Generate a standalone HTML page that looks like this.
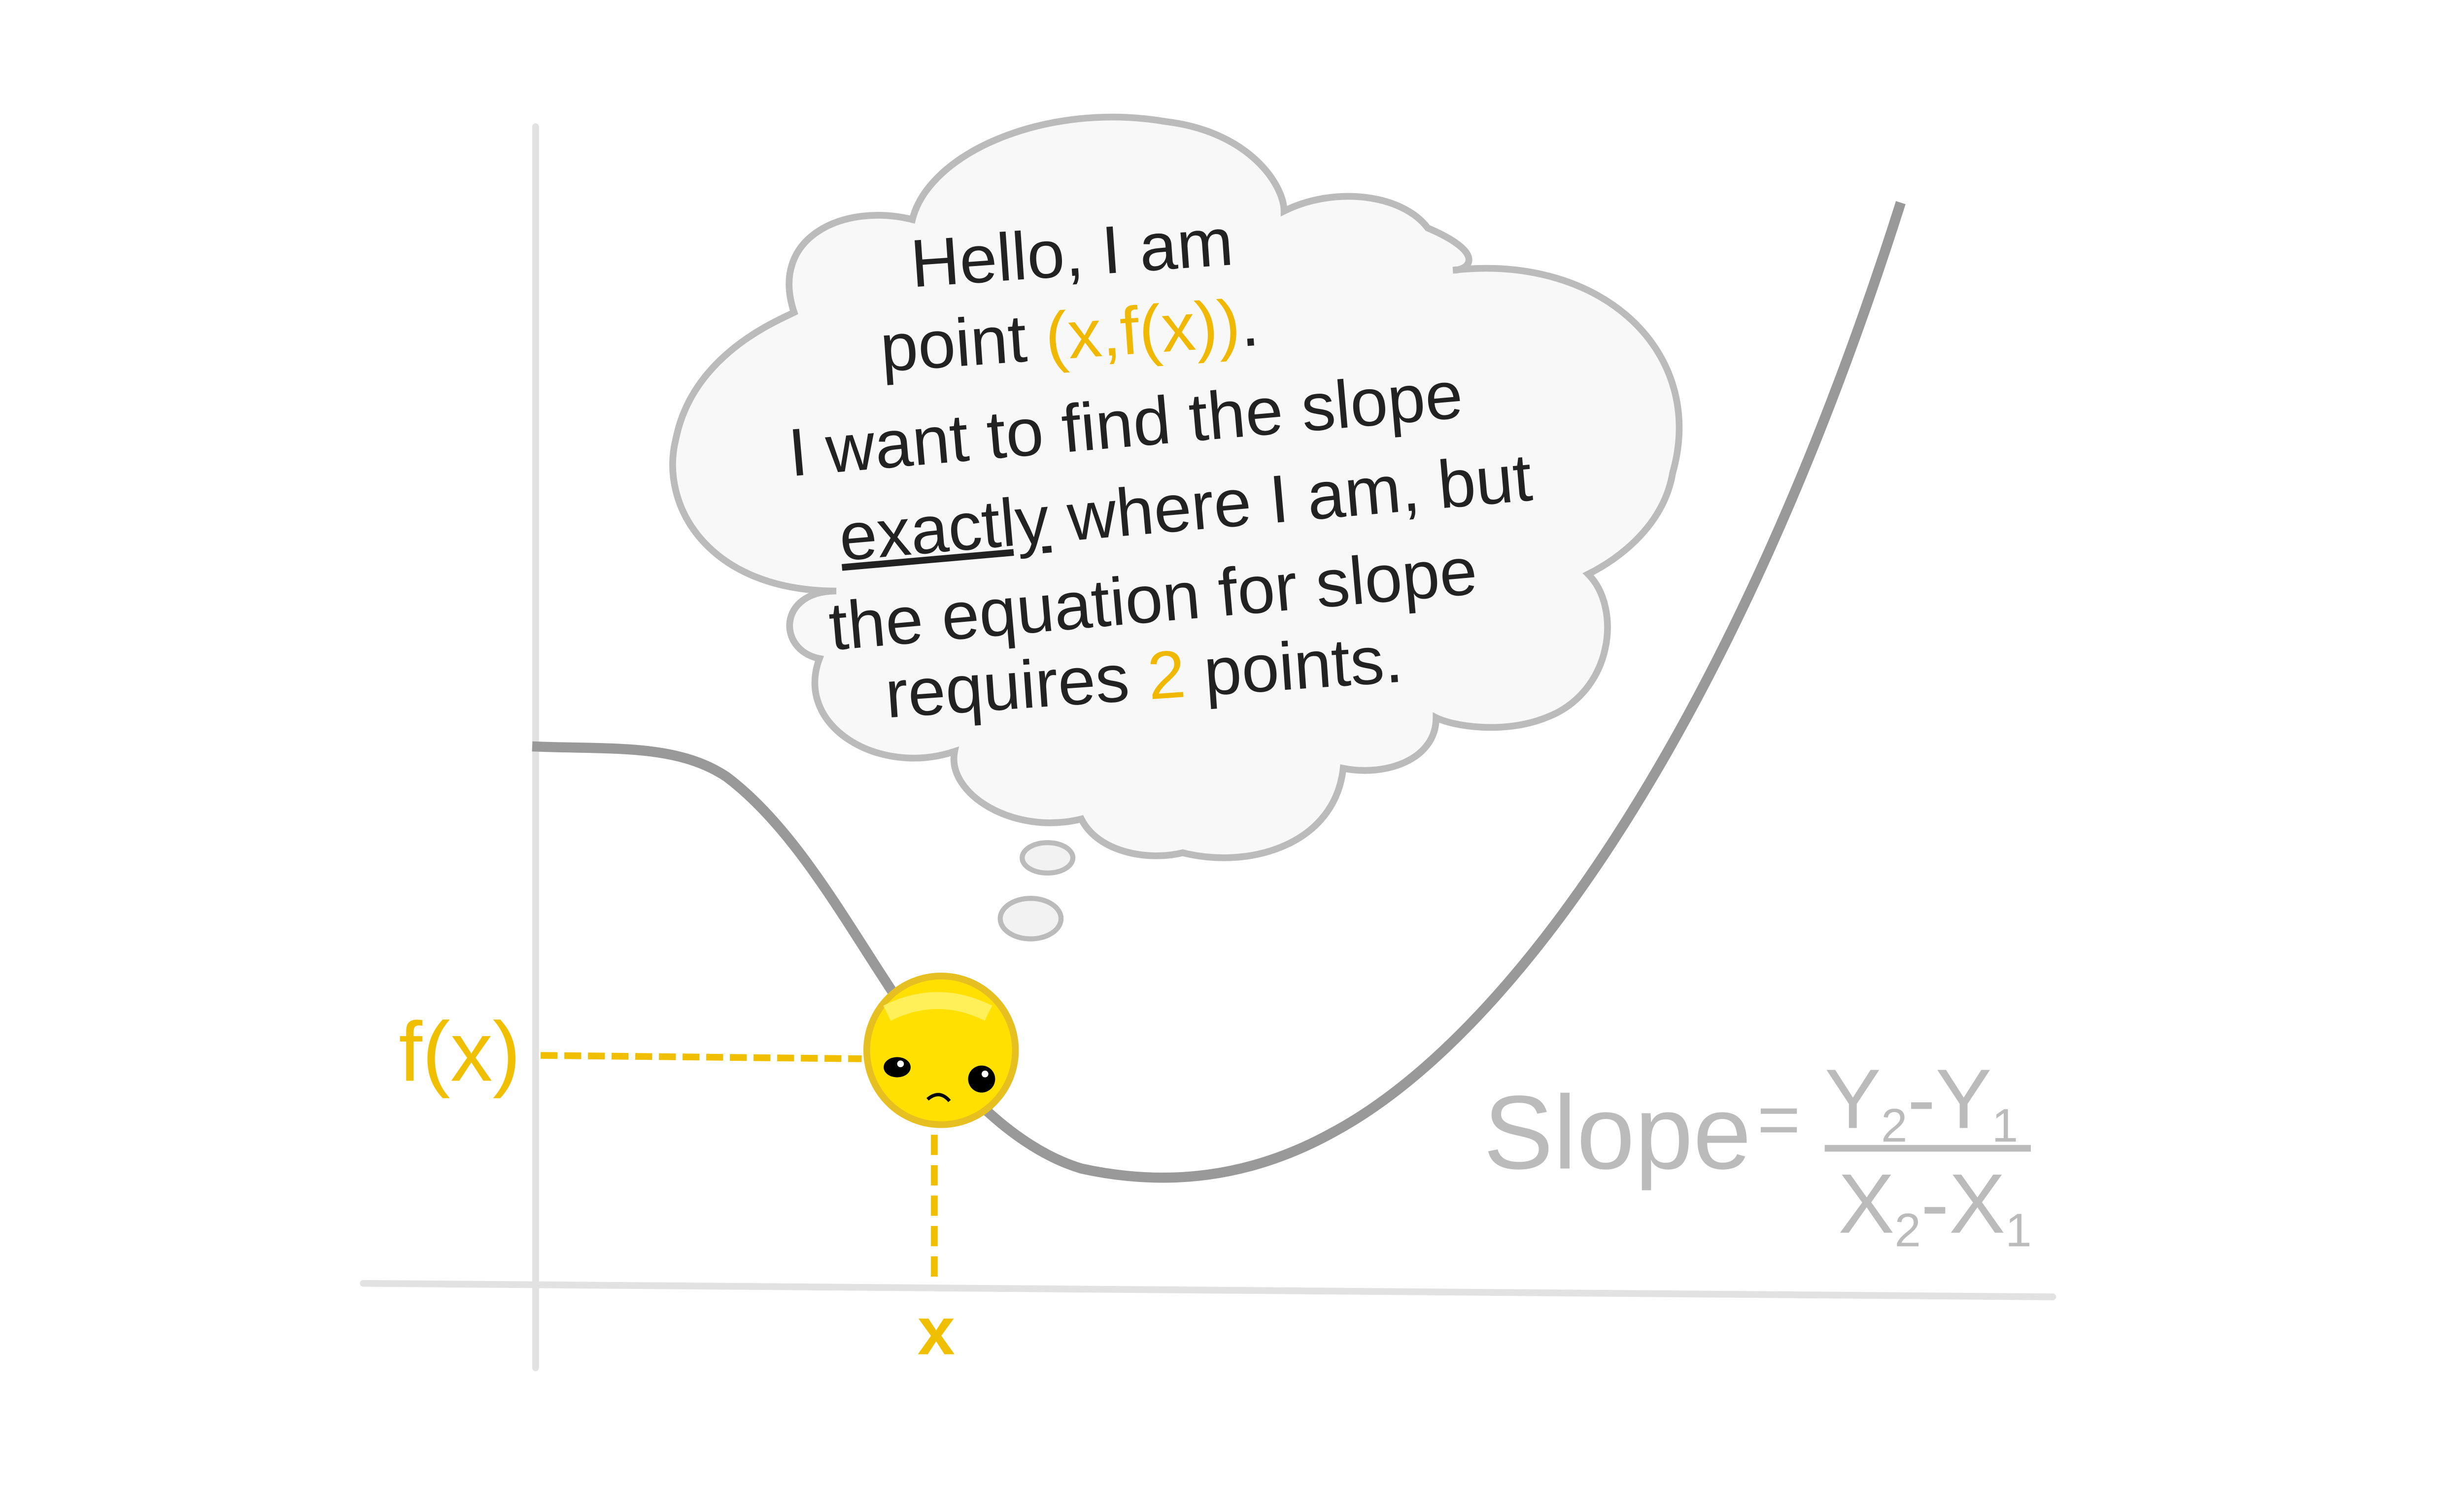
<!DOCTYPE html>
<html><head><style>html,body{margin:0;padding:0;background:#fff;width:5321px;height:3016px;overflow:hidden;}svg{display:block}</style></head>
<body>
<svg width="5321" height="3016" viewBox="0 0 1552 880" preserveAspectRatio="none" xmlns="http://www.w3.org/2000/svg" overflow="hidden">
<rect width="1552" height="880" fill="#fff"/>
<line x1="317" y1="75" x2="317" y2="810" stroke="#e2e2e2" stroke-width="4" stroke-linecap="round"/>
<line x1="215" y1="760" x2="1215" y2="768" stroke="#e2e2e2" stroke-width="4" stroke-linecap="round"/>
<path d="M315 442 C360 444 400 440 430 460 C470 490 500 545 530 590 C560 640 600 680 640 692 C690 703 740 698 790 670 C900 610 1030 420 1125 120" fill="none" stroke="#999" stroke-width="6"/>
<path d="M470 185 C455 140 500 120 540 130 C550 90 620 60 690 72 C740 78 760 110 760 125 C790 110 830 115 845 135 C880 150 870 160 860 160 C950 150 1010 210 990 280 C985 310 960 330 940 340 C960 360 955 410 915 425 C890 435 860 430 850 425 C850 450 820 460 795 455 C790 500 740 515 700 505 C680 510 650 505 640 485 C600 495 560 470 565 445 C520 460 470 430 485 390 C460 385 460 350 495 350 C420 350 390 300 400 260 C410 210 460 190 470 185 Z" fill="#f8f8f8" stroke="#bbb" stroke-width="4"/>
<ellipse cx="620" cy="508" rx="15" ry="9" fill="#f2f2f2" stroke="#bbb" stroke-width="3"/>
<ellipse cx="610" cy="544" rx="18" ry="12" fill="#f2f2f2" stroke="#bbb" stroke-width="3"/>
<g font-family="Liberation Sans, sans-serif" font-size="40" fill="#222">
<text x="540" y="170" transform="rotate(-4 540 170)">Hello, I am</text>
<text x="522" y="220" transform="rotate(-4 522 220)">point <tspan fill="#f0b800">(x,f(x))</tspan>.</text>
<text x="468" y="282" transform="rotate(-5 468 282)">I want to find the slope</text>
<text x="498" y="332" transform="rotate(-5 498 332)"><tspan text-decoration="underline">exactly</tspan> where I am, but</text>
<text x="492" y="385" transform="rotate(-5 492 385)">the equation for slope</text>
<text x="525" y="425" transform="rotate(-4 525 425)">requires <tspan fill="#f0b800">2</tspan> points.</text>
</g>
<line x1="320" y1="625" x2="510" y2="627" stroke="#f0c000" stroke-width="4" stroke-dasharray="10 4"/>
<line x1="553" y1="672" x2="553" y2="760" stroke="#f0c000" stroke-width="4" stroke-dasharray="12 6"/>
<circle cx="557" cy="622" r="44" fill="#ffe000" stroke="#e6c020" stroke-width="4"/>
<path d="M525 600 Q555 585 585 600" stroke="#fff680" stroke-width="10" fill="none" opacity="0.7"/>
<ellipse cx="531" cy="632" rx="8" ry="6" fill="#000"/>
<circle cx="533" cy="630" r="2" fill="#fff"/>
<circle cx="581" cy="639" r="8" fill="#000"/>
<circle cx="583" cy="636" r="2" fill="#fff"/>
<path d="M549 651 Q556 645 562 652" stroke="#000" stroke-width="2" fill="none"/>
<text x="236" y="640" font-family="Liberation Sans, sans-serif" font-size="50" fill="#f0c000">f(x)</text>
<text x="543" y="802" font-family="Liberation Sans, sans-serif" font-size="40" font-weight="bold" fill="#f0c000">x</text>
<g font-family="Liberation Sans, sans-serif" fill="#bbb">
<text x="878" y="692" font-size="62">Slope</text>
<text x="1040" y="678" font-size="44">=</text>
<text x="1080" y="668" font-size="50">Y<tspan font-size="28" dy="8">2</tspan><tspan dy="-8">-Y</tspan><tspan font-size="28" dy="8">1</tspan></text>
<line x1="1080" y1="680" x2="1202" y2="680" stroke="#bbb" stroke-width="4"/>
<text x="1088" y="730" font-size="50">X<tspan font-size="28" dy="8">2</tspan><tspan dy="-8">-X</tspan><tspan font-size="28" dy="8">1</tspan></text>
</g>
</svg>
</body></html>
